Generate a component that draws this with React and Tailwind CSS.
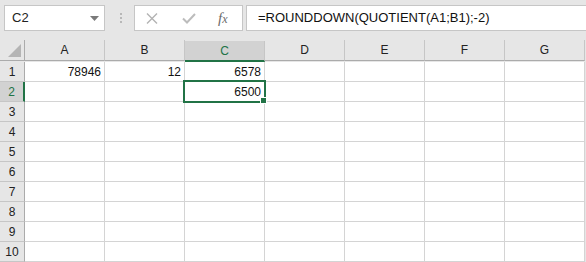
import React from "react";

const cols = ["A", "B", "C", "D", "E", "F", "G"];
const rows = [1, 2, 3, 4, 5, 6, 7, 8, 9, 10];

const data = {
  A1: "78946",
  B1: "12",
  C1: "6578",
  C2: "6500",
};

const green = "#217346";

function NameBox() {
  return (
    <div className="ml-[4px] w-[101px] h-[26px] border border-[#c6c6c6] bg-white flex items-center pl-[7px] pr-[5px]">
      <span className="flex-1 text-[13px] text-[#222]">C2</span>
      <svg width="9" height="5" viewBox="0 0 9 5">
        <path d="M0 0 L9 0 L4.5 5 Z" fill="#7a7a7a" />
      </svg>
    </div>
  );
}

function FormulaButtons() {
  return (
    <div className="ml-[12px] w-[109px] h-[26px] border border-[#c6c6c6] bg-white flex items-center">
      <svg className="ml-[11px]" width="12" height="11" viewBox="0 0 12 11">
        <path d="M1 0.5 L11 10.5 M11 0.5 L1 10.5" stroke="#b3b3b3" strokeWidth="1.4" />
      </svg>
      <svg className="ml-[24px]" width="14" height="11" viewBox="0 0 14 11">
        <path d="M1 5.5 L5 9.5 L13 1" stroke="#bcbcbc" strokeWidth="2" fill="none" />
      </svg>
      <span
        className="ml-[22px] text-[15px] italic text-[#6b6b6b] leading-none"
        style={{ fontFamily: '"Liberation Serif", serif' }}
      >
        f<span className="text-[12px]">x</span>
      </span>
    </div>
  );
}

export default function App() {
  return (
    <div
      className="w-[586px] h-[262px] overflow-hidden bg-[#e6e6e6] text-[12px] text-[#111]"
      style={{ fontFamily: '"Liberation Sans", Arial, sans-serif' }}
    >
      <div className="h-[40px] flex pt-[5px]">
        <NameBox />
        <div className="ml-[15px] mt-[8px] flex flex-col gap-[2px]">
          <div className="w-[2px] h-[2px] bg-[#b8b8b8]" />
          <div className="w-[2px] h-[2px] bg-[#b8b8b8]" />
          <div className="w-[2px] h-[2px] bg-[#b8b8b8]" />
        </div>
        <FormulaButtons />
        <div className="ml-[3px] flex-1 h-[26px] border border-r-0 border-[#c6c6c6] bg-white flex items-center pl-[11px] text-[13px] text-[#111]">
          =ROUNDDOWN(QUOTIENT(A1;B1);-2)
        </div>
      </div>

      <div className="grid grid-cols-[25px_repeat(7,80px)]">
        <div className="h-[21px] border-r border-b border-[#ababab] relative">
          <svg className="absolute left-[8px] top-[4px]" width="14" height="14" viewBox="0 0 14 14">
            <path d="M13 0 L13 13 L0 13 Z" fill="#b4b4b4" />
          </svg>
        </div>
        {cols.map((c) => (
          <div
            key={c}
            className={
              c === "C"
                ? "h-[21px] border-r border-[#c6c6c6] border-b-2 border-b-[#217346] bg-[#d2d2d2] flex items-center justify-center text-[#217346] mt-[1px] h-[20px]"
                : "h-[21px] border-r border-r-[#c6c6c6] border-b border-b-[#ababab] flex items-center justify-center text-[#222]"
            }
          >
            {c}
          </div>
        ))}

        {rows.map((r) => (
          <React.Fragment key={r}>
            <div
              className={
                r === 2
                  ? "h-[20px] border-r-2 border-r-[#217346] border-b border-b-[#c6c6c6] bg-[#d2d2d2] flex items-center justify-center text-[#217346]"
                  : "h-[20px] border-r border-r-[#ababab] border-b border-b-[#c6c6c6] flex items-center justify-center text-[#222]"
              }
            >
              {r}
            </div>
            {cols.map((c) => {
              const id = c + r;
              return (
                <div
                  key={id}
                  className="relative h-[20px] bg-white border-r border-b border-[#d4d4d4] flex items-center justify-end pr-[3px] pt-[1px]"
                >
                  {data[id]}
                  {id === "C2" && (
                    <div className="absolute left-[-2px] top-[-2px] w-[83px] h-[23px] border-2 border-[#217346] z-10">
                      <div className="absolute left-[75px] top-[15px] w-[7px] h-[7px] bg-[#217346] border border-white" />
                    </div>
                  )}
                </div>
              );
            })}
          </React.Fragment>
        ))}
      </div>
    </div>
  );
}
